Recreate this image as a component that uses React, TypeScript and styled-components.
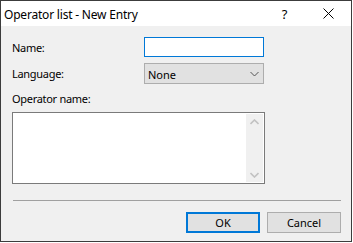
import React from 'react'
import styled, { createGlobalStyle } from 'styled-components'

const Global = createGlobalStyle`
  html, body {
    margin: 0;
    padding: 0;
    background: #ffffff;
  }
  body {
    font-family: "Noto Sans", "Liberation Sans", sans-serif;
    color: #000;
  }
`

const Window = styled.div`
  width: 352px;
  height: 242px;
  box-sizing: border-box;
  border: 1px solid #3c3c3c;
  display: flex;
  flex-direction: column;
  background: #f0f0f0;
`

const TitleBar = styled.div`
  height: 25px;
  background: #fff;
  display: flex;
  align-items: center;
  padding-left: 3px;
`

const Title = styled.div`
  flex: 1;
  font-size: 12px;
  letter-spacing: -0.2px;
  padding-top: 1px;
`

const TitleButton = styled.div<{ $shift?: number }>`
  width: 46px;
  height: 25px;
  display: flex;
  align-items: center;
  justify-content: center;
  font-size: 13px;
  padding-left: ${p => p.$shift ?? 0}px;
  box-sizing: border-box;
`

const Body = styled.div`
  flex: 1;
  display: flex;
  flex-direction: column;
  padding: 11px 10px 9px 11px;
`

const Row = styled.div`
  display: grid;
  grid-template-columns: 132px 120px;
  align-items: center;
  margin-bottom: 6px;
`

const Label = styled.label`
  font-size: 11px;
  letter-spacing: -0.3px;
  color: #000;
`

const TextInput = styled.div`
  height: 20px;
  box-sizing: border-box;
  border: 1px solid #0078d7;
  background: #fff;
`

const Select = styled.div`
  height: 21px;
  box-sizing: border-box;
  border: 1px solid #adadad;
  background: #e1e1e1;
  display: flex;
  align-items: center;
  justify-content: space-between;
  padding: 1px 4px 0 3px;
  font-size: 11px;
`

const MemoLabel = styled(Label)`
  margin-top: 1px;
  margin-bottom: 6px;
`

const Memo = styled.div`
  width: 253px;
  height: 72px;
  box-sizing: border-box;
  border: 1px solid #7a7a7a;
  background: #fff;
  display: flex;
  justify-content: flex-end;
  padding: 1px;
`

const ScrollBar = styled.div`
  width: 17px;
  background: #f0f0f0;
  display: flex;
  flex-direction: column;
  justify-content: space-between;
  align-items: center;
  padding: 5px 0 4px;
`

const Separator = styled.div`
  height: 1px;
  background: #a0a0a0;
  margin-top: 16px;
  margin-left: 1px;
`

const ButtonRow = styled.div`
  display: flex;
  justify-content: flex-end;
  gap: 7px;
  margin-top: 11px;
`

const Button = styled.div<{ $primary?: boolean }>`
  width: 74px;
  height: 21px;
  box-sizing: border-box;
  border: ${p => (p.$primary ? '2px solid #0078d7' : '1px solid #adadad')};
  background: #e1e1e1;
  display: flex;
  align-items: center;
  justify-content: center;
  font-size: 11px;
`

const Chevron = ({ up, color }: { up?: boolean; color: string }) => (
  <svg width="9" height="6" viewBox="0 0 9 6">
    <path
      d={up ? 'M0.5 5 L4.5 1 L8.5 5' : 'M0.5 1 L4.5 5 L8.5 1'}
      fill="none"
      stroke={color}
      strokeWidth={1.6}
    />
  </svg>
)

const App = () => (
  <>
    <Global />
    <Window>
      <TitleBar>
        <Title>Operator list - New Entry</Title>
        <TitleButton $shift={5}>?</TitleButton>
        <TitleButton>
          <svg width="11" height="11" viewBox="0 0 11 11">
            <path d="M0.5 0.5 L10.5 10.5 M10.5 0.5 L0.5 10.5" stroke="#000" strokeWidth="1" />
          </svg>
        </TitleButton>
      </TitleBar>
      <Body>
        <Row>
          <Label>Name:</Label>
          <TextInput />
        </Row>
        <Row>
          <Label>Language:</Label>
          <Select>
            <span>None</span>
            <svg width="9" height="6" viewBox="0 0 9 6">
              <path d="M0.5 1 L4.5 5 L8.5 1" fill="none" stroke="#555" strokeWidth="1" />
            </svg>
          </Select>
        </Row>
        <MemoLabel>Operator name:</MemoLabel>
        <Memo>
          <ScrollBar>
            <Chevron up color="#c2c2c2" />
            <Chevron color="#c2c2c2" />
          </ScrollBar>
        </Memo>
        <Separator />
        <ButtonRow>
          <Button $primary>OK</Button>
          <Button>Cancel</Button>
        </ButtonRow>
      </Body>
    </Window>
  </>
)

export default App
